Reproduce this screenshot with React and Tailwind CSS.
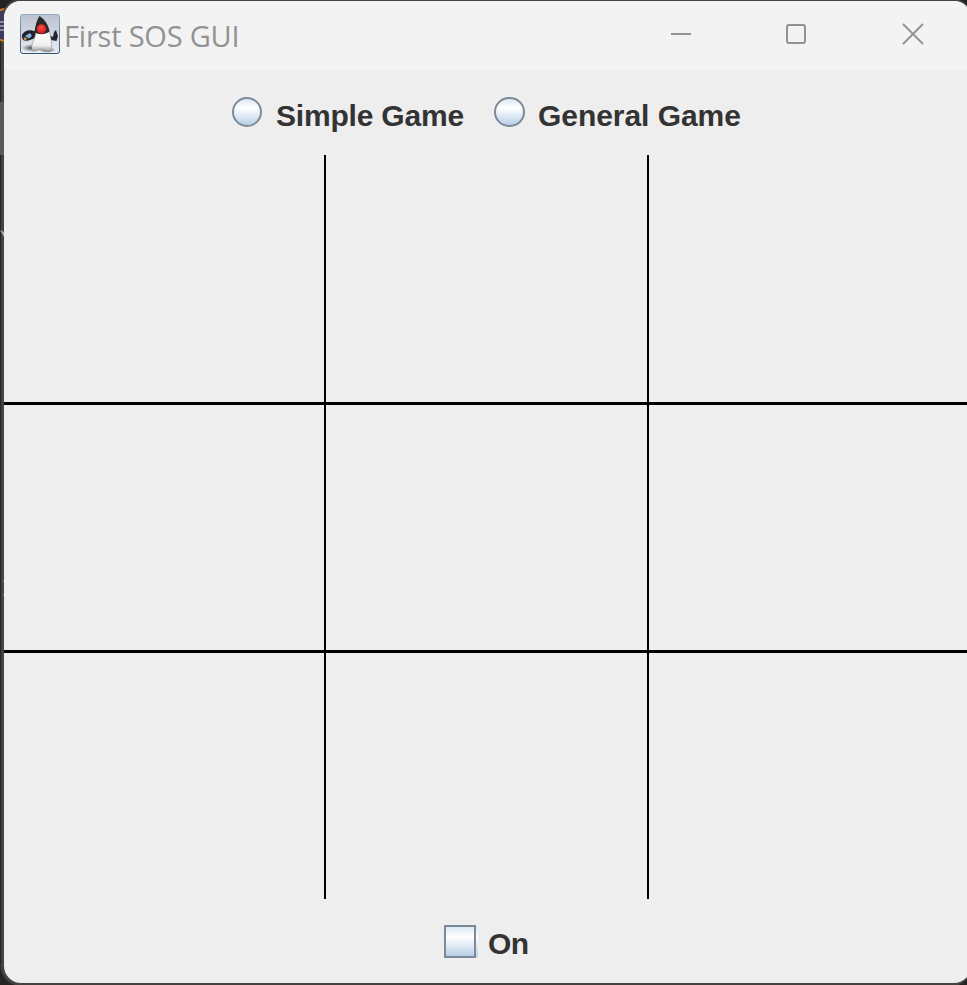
import React from 'react';

function DukeIcon() {
  return (
    <svg className="block h-10 w-10 shrink-0" viewBox="0 0 40 40">
      <defs>
        <linearGradient id="tile" x1="0" y1="0" x2="0" y2="1">
          <stop offset="0" stopColor="#bcc4d1" />
          <stop offset="0.6" stopColor="#d5d9e2" />
          <stop offset="1" stopColor="#eceef3" />
        </linearGradient>
        <linearGradient id="edge" x1="0" y1="0" x2="0" y2="1">
          <stop offset="0" stopColor="#8eabc0" />
          <stop offset="1" stopColor="#2f5674" />
        </linearGradient>
        <linearGradient id="belly" x1="0" y1="0" x2="0" y2="1">
          <stop offset="0" stopColor="#ffffff" />
          <stop offset="0.7" stopColor="#f0f0f0" />
          <stop offset="1" stopColor="#9a9a9a" />
        </linearGradient>
        <radialGradient id="nose" cx="0.45" cy="0.35" r="0.65">
          <stop offset="0" stopColor="#ff4a40" />
          <stop offset="1" stopColor="#d41a20" />
        </radialGradient>
        <radialGradient id="shade">
          <stop offset="0" stopColor="#303030" />
          <stop offset="1" stopColor="#777777" stopOpacity="0" />
        </radialGradient>
      </defs>
      <rect x="0.5" y="0.5" width="39" height="39" rx="2.5" fill="url(#tile)" stroke="url(#edge)" />
      <ellipse cx="12" cy="34" rx="11" ry="4" fill="url(#shade)" />
      <ellipse cx="27" cy="36" rx="9" ry="3" fill="url(#shade)" />
      <path d="M16 18 C11 15 4 16 2 21 C1.500 24 3 27 6 27 L10 26 L15 24Z" fill="#20242a" />
      <path d="M5 22 L10 19 L12 22 L9 24.500Z" fill="#7fb2dc" />
      <path d="M3.500 23 L7 24 L6 27 L4 26Z" fill="#bd8a4d" />
      <path d="M29 21 L33 23 L34 18 L36 16 L38 22 L36.500 27 L31 26Z" fill="#242629" />
      <path d="M16 17 C16 22 13 27 12 31 C11 36 12 38 15 37 C18 36 20 34.500 23 35.500 C26 38 31 38 31.500 36 C32 30 31 21 28.500 17Z" fill="url(#belly)" stroke="#85878a" strokeWidth="0.5" />
      <path d="M19.500 2 C17 6 15 12 14.500 18 C18 21 25 21 29.500 17.500 C28.500 10 23 4 19.500 2Z" fill="#292929" />
      <circle cx="21.500" cy="15" r="4.700" fill="url(#nose)" />
    </svg>
  );
}

function TitleBar() {
  return (
    <header className="flex h-[69px] shrink-0 items-start bg-[#f3f3f3] pl-4">
      <div className="flex pt-[13px]">
        <DukeIcon />
        <h1 className="ml-1 mt-px whitespace-nowrap font-['Open_Sans','Noto_Sans',sans-serif] text-[29px] font-normal leading-[42px] tracking-[-0.2px] text-[#929292]">
          First SOS GUI
        </h1>
      </div>
      <div className="ml-auto flex pr-[47px] pt-[22px] text-[#929292]">
        <svg className="mr-[93px] block h-[22px] w-[22px]" viewBox="0 0 22 22">
          <path d="M1 11H21" stroke="currentColor" strokeWidth="2" />
        </svg>
        <svg className="mr-[95px] block h-[22px] w-[22px]" viewBox="0 0 22 22" fill="none">
          <rect x="2" y="2" width="18" height="18" rx="2" stroke="currentColor" strokeWidth="2" />
        </svg>
        <svg className="block h-[22px] w-[22px]" viewBox="0 0 22 22">
          <path d="M1 1L21 21M21 1L1 21" stroke="currentColor" strokeWidth="1.800" />
        </svg>
      </div>
    </header>
  );
}

function GameMode({ label, radio, text }) {
  return (
    <label className="flex items-start">
      <span className={`mt-px block h-[30px] shrink-0 rounded-full border-2 border-[#7a8a99] bg-linear-to-b from-[#dde8f3] via-white via-35% to-[#b8cfe5] ${radio}`} />
      <span className={`whitespace-nowrap ${text}`}>{label}</span>
    </label>
  );
}

const cells = [
  'border-r-2 border-b-3',
  'border-r-2 border-b-3',
  'border-b-3',
  'border-r-2 border-b-3',
  'border-r-2 border-b-3',
  'border-b-3',
  'border-r-2',
  'border-r-2',
  '',
];

function Backdrop() {
  return (
    <svg className="absolute inset-0 h-[985px] w-[967px]" viewBox="0 0 967 985">
      <rect width="967" height="985" fill="#252423" />
      <circle cx="6" cy="25" r="16" fill="#403964" stroke="#c77a1c" strokeWidth="2" />
      <path d="M0 22H5M0 26H5M0 30H5" stroke="#aaa6ba" strokeWidth="1.500" />
      <path d="M2.500 42V964" stroke="#454341" strokeWidth="3" />
      <path d="M4 18C4 8 12 0.500 22 0.500H952C962 0.500 969 8 970 18M2.500 964C2.500 976 10 984 22 984H952C962 984 969 976 970 966" fill="none" stroke="#454341" strokeWidth="4" />
      <rect y="102" width="4" height="53" fill="#565b5c" />
      <path d="M0 230L4 232V237Z" fill="#aaaaaa" />
      <rect x="3" y="580" width="1" height="2" fill="#777777" />
      <rect x="3" y="594" width="1" height="2" fill="#777777" />
    </svg>
  );
}

export default function App() {
  return (
    <div className="relative h-[985px] w-[967px] overflow-hidden pl-1 pt-px">
      <Backdrop />
      <div className="relative flex h-[982px] w-[967px] flex-col overflow-hidden rounded-[17px] bg-[#eeeeee] font-['Liberation_Sans',Arial,sans-serif] text-[30px] font-bold text-[#333333]">
        <TitleBar />
        <div className="flex h-[85px] shrink-0 items-start pl-[228px] pt-[26px] leading-[39px]">
          <GameMode label="Simple Game" radio="w-[30px]" text="ml-[14px] w-[218px] tracking-[-0.2px]" />
          <GameMode label="General Game" radio="w-[31px]" text="ml-[13px] tracking-[-0.05px]" />
        </div>
        <main className="grid h-[744px] shrink-0 grid-cols-[322px_323px_322px] grid-rows-[250px_248px_246px]">
          {cells.map((edges, i) => (
            <div key={i} className={`border-black ${edges}`} />
          ))}
        </main>
        <label className="flex items-start pl-[440px] pt-[26px] leading-[38px]">
          <span className="block h-[33px] w-[32px] border-2 border-[#7a8a99] bg-linear-to-b from-[#dde8f3] via-white via-35% to-[#b8cfe5]" />
          <span className="mt-px block h-[31px] w-[2px] bg-linear-to-b from-[#dde8f3] via-white via-35% to-[#b8cfe5]" />
          <span className="ml-[10px] tracking-[-0.5px]">On</span>
        </label>
      </div>
    </div>
  );
}
